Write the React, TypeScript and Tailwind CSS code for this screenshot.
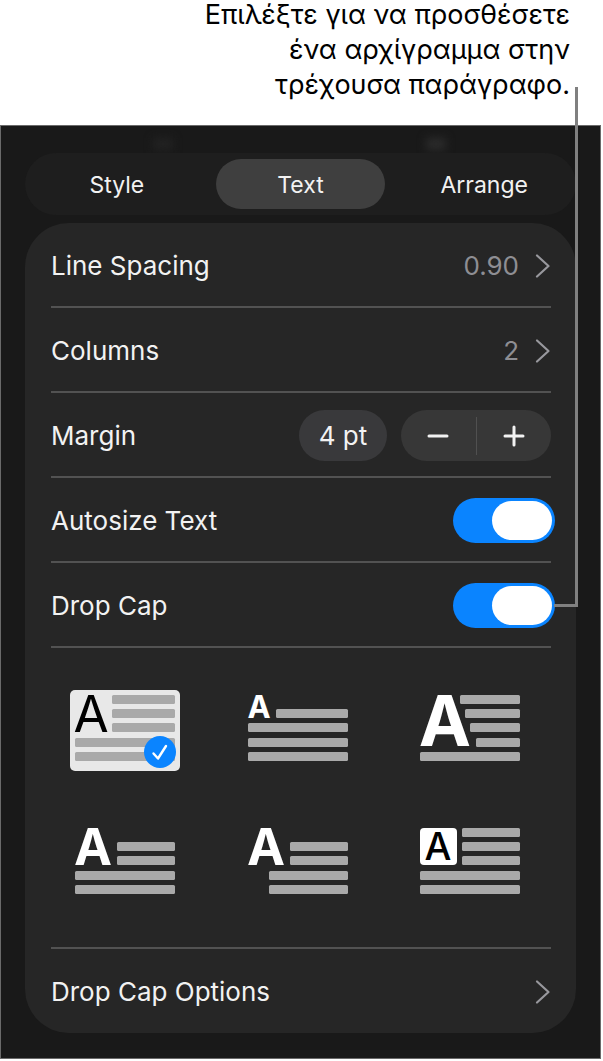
import type { ReactNode } from "react";
import { useState } from "react";

const TABS = ["Style", "Text", "Arrange"];

type Cap = {
  name: string;
  letter: { x: number; y: number; size: number; weight: number; fill: string };
  // x, y and width of each text line
  lines: [number, number, number][];
  box?: boolean;
};

const CAPS: Cap[] = [
  {
    name: "Plain, three lines",
    letter: { x: 21, y: 42, size: 51, weight: 400, fill: "#000" },
    lines: [[42, 5, 63], [42, 19, 63], [42, 33, 63], [5, 48, 100], [5, 62, 100]],
  },
  {
    name: "Raised, small",
    letter: { x: 16, y: 28, size: 31, weight: 700, fill: "#fff" },
    lines: [[33, 19, 72], [5, 33, 100], [5, 48, 100], [5, 62, 100]],
  },
  {
    name: "Contoured",
    letter: { x: 30, y: 56, size: 70, weight: 700, fill: "#fff" },
    lines: [[45, 5, 60], [50, 19, 55], [55, 33, 50], [61, 48, 44], [5, 62, 100]],
  },
  {
    name: "Raised, large",
    letter: { x: 23, y: 42, size: 51, weight: 700, fill: "#fff" },
    lines: [[47, 19, 58], [47, 33, 58], [5, 48, 100], [5, 62, 100]],
  },
  {
    name: "Outdented",
    letter: { x: 23, y: 42, size: 51, weight: 700, fill: "#fff" },
    lines: [[47, 19, 58], [47, 33, 58], [26, 48, 79], [26, 62, 79]],
  },
  {
    name: "Boxed",
    letter: { x: 23, y: 37, size: 38, weight: 500, fill: "#000" },
    lines: [[47, 5, 58], [47, 19, 58], [47, 33, 58], [5, 48, 100], [5, 62, 100]],
    box: true,
  },
];

function Row({ children, last }: { children: ReactNode; last?: boolean }) {
  return (
    <div
      className={
        last
          ? "flex h-[84px] items-center justify-between pt-0.5"
          : "flex h-[85px] items-center justify-between border-b-2 border-[#525252] pt-0.5"
      }
    >
      {children}
    </div>
  );
}

function Chevron() {
  return (
    <svg width="16" height="26" viewBox="0 0 16 26" fill="none" aria-hidden="true">
      <path
        d="M2 2.5 L13.5 13 L2 23.5"
        stroke="#98989d"
        strokeWidth="2.2"
        strokeLinecap="round"
        strokeLinejoin="round"
      />
    </svg>
  );
}

function LinkRow({ label, value, last }: { label: string; value?: string; last?: boolean }) {
  return (
    <Row last={last}>
      <button className="flex w-full items-center justify-between">
        <span>{label}</span>
        <span className="flex items-center gap-4 text-[#8e8e93]">
          {value}
          <Chevron />
        </span>
      </button>
    </Row>
  );
}

function SwitchRow({ label, id }: { label: string; id: string }) {
  const [on, setOn] = useState(true);
  return (
    <Row>
      <label htmlFor={id}>{label}</label>
      <input
        id={id}
        type="checkbox"
        role="switch"
        checked={on}
        onChange={(e) => setOn(e.target.checked)}
        className="-mr-1 flex h-[45px] w-[102px] appearance-none items-center rounded-full bg-[#48484a] px-[3px] before:h-[39px] before:w-[60px] before:rounded-full before:bg-white checked:justify-end checked:bg-[#0a84ff]"
      />
    </Row>
  );
}

function CapButton({ cap, selected, onSelect }: { cap: Cap; selected: boolean; onSelect: () => void }) {
  const { letter } = cap;
  return (
    <button aria-label={cap.name} aria-pressed={selected} onClick={onSelect}>
      <svg width="110" height="81" viewBox="0 0 110 81" className="overflow-visible">
        {selected && <rect width="110" height="81" rx="5" fill="#e8e8e8" />}
        {cap.box && <rect x="5" y="5" width="37" height="37" rx="4" fill="#fff" />}
        {cap.lines.map(([x, y, w]) => (
          <rect key={y} x={x} y={y} width={w} height="9" rx="1.5" fill="#a9a9a9" />
        ))}
        <text
          x={letter.x}
          y={letter.y}
          fontSize={letter.size}
          fontWeight={letter.weight}
          fill={letter.fill}
          textAnchor="middle"
        >
          A
        </text>
        {selected && (
          <>
            <circle cx="90" cy="62" r="16" fill="#0a84ff" />
            <path
              d="M83.5 63.5 L88 68.5 L96 56"
              fill="none"
              stroke="#fff"
              strokeWidth="2.4"
              strokeLinecap="round"
              strokeLinejoin="round"
            />
          </>
        )}
      </svg>
    </button>
  );
}

export default function App() {
  const [tab, setTab] = useState("Text");
  const [margin, setMargin] = useState(4);
  const [cap, setCap] = useState(0);

  return (
    <main className="relative flow-root bg-white font-['Inter',sans-serif]">
      <p className="-mt-[3px] pr-[33px] pb-[23px] text-right text-[27px] leading-[35px] text-black">
        Επιλέξτε για να προσθέσετε
        <br />
        ένα αρχίγραμμα στην
        <br />
        τρέχουσα παράγραφο.
      </p>

      <section className="relative mr-0.5 border border-[#6a6a6a] bg-[#191919] px-6 pt-[27px] pb-[25px] text-[26px] leading-8 text-[#f2f2f2]">
        {/* content scrolled behind the tab bar */}
        <div className="absolute top-3 left-[152px] h-3 w-5 bg-[#222] blur-xs" />
        <div className="absolute top-3 left-[425px] h-3 w-5 bg-[#2b2b2b] blur-xs" />

        <nav className="relative grid h-[62px] grid-cols-3 items-center rounded-full bg-[#1e1e1e] text-[23px]">
          {TABS.map((t) => (
            <button
              key={t}
              aria-pressed={t === tab}
              onClick={() => setTab(t)}
              className={
                t === tab
                  ? "mx-[7px] h-[50px] rounded-full bg-[#3f3f3f] pt-0.5"
                  : "mx-[7px] h-[50px] rounded-full pt-0.5"
              }
            >
              {t}
            </button>
          ))}
        </nav>

        <div className="mt-2 rounded-[44px] bg-[#262626] pr-[25px] pl-[26px]">
          <LinkRow label="Line Spacing" value="0.90" />
          <LinkRow label="Columns" value="2" />
          <Row>
            <span>Margin</span>
            <div className="flex items-center gap-3.5">
              <button className="h-[51px] w-[88px] rounded-full bg-[#39393b]">{margin} pt</button>
              <div className="flex h-[51px] w-[150px] items-center rounded-full bg-[#373737]">
                <button
                  aria-label="Decrease margin"
                  onClick={() => setMargin(margin - 1)}
                  className="flex flex-1 justify-center"
                >
                  <svg width="22" height="22" viewBox="0 0 22 22" stroke="#f2f2f2" strokeWidth="3" strokeLinecap="round">
                    <path d="M2 11 H20" />
                  </svg>
                </button>
                <span className="h-[38px] w-px bg-[#505050]" />
                <button
                  aria-label="Increase margin"
                  onClick={() => setMargin(margin + 1)}
                  className="flex flex-1 justify-center"
                >
                  <svg width="22" height="22" viewBox="0 0 22 22" stroke="#f2f2f2" strokeWidth="3" strokeLinecap="round">
                    <path d="M2 11 H20 M11 2 V20" />
                  </svg>
                </button>
              </div>
            </div>
          </Row>
          <SwitchRow label="Autosize Text" id="autosize" />
          <SwitchRow label="Drop Cap" id="drop-cap" />

          <div className="border-b-2 border-[#525252] pt-[42px] pr-[26px] pb-[43px] pl-[19px]">
            <div className="grid grid-cols-[repeat(3,110px)] justify-between gap-y-[52px]">
              {CAPS.map((c, i) => (
                <CapButton key={c.name} cap={c} selected={i === cap} onSelect={() => setCap(i)} />
              ))}
            </div>
          </div>

          <LinkRow label="Drop Cap Options" last />
        </div>
      </section>

      {/* callout line down to the Drop Cap switch */}
      <div className="pointer-events-none absolute top-[87px] right-[25px] h-[520px] w-6 border-r-[3px] border-b-[3px] border-[#808080]" />
    </main>
  );
}
